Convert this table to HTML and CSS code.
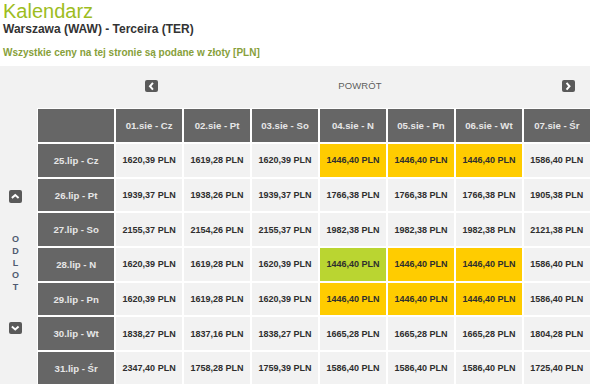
FILE: index.html
```html
<!DOCTYPE html>
<html lang="pl">
<head>
<meta charset="utf-8">
<title>Kalendarz</title>
<link rel="stylesheet" href="styles.css">
</head>
<body>
<div class="head">
  <h1 class="title">Kalendarz</h1>
  <h2 class="route">Warszawa (WAW) - Terceira (TER)</h2>
  <p class="note">Wszystkie ceny na tej stronie są podane w złoty [PLN]</p>
</div>
<div class="panel">
  <div class="nav">
    <span class="btn"><svg viewBox="0 0 12 12"><polyline points="7,3.5 4.8,6 7,8.5"/></svg></span>
    <span class="back">POWRÓT</span>
    <span class="btn"><svg viewBox="0 0 12 12"><polyline points="5,3.5 7.2,6 5,8.5"/></svg></span>
  </div>
  <div class="body">
    <div class="side">
      <span class="btn up"><svg viewBox="0 0 12 12"><polyline points="3.5,7 6,4.8 8.5,7"/></svg></span>
      <span class="odlot">O<br>D<br>L<br>O<br>T</span>
      <span class="btn down"><svg viewBox="0 0 12 12"><polyline points="3.5,5 6,7.2 8.5,5"/></svg></span>
    </div>
    <div class="grid">
      <div class="hd corner"></div>
      <div class="hd">01.sie - Cz</div>
      <div class="hd">02.sie - Pt</div>
      <div class="hd">03.sie - So</div>
      <div class="hd">04.sie - N</div>
      <div class="hd">05.sie - Pn</div>
      <div class="hd">06.sie - Wt</div>
      <div class="hd">07.sie - Śr</div>

      <div class="lbl">25.lip - Cz</div>
      <div class="c">1620,39 PLN</div><div class="c">1619,28 PLN</div><div class="c">1620,39 PLN</div>
      <div class="c y">1446,40 PLN</div><div class="c y">1446,40 PLN</div><div class="c y">1446,40 PLN</div>
      <div class="c">1586,40 PLN</div>

      <div class="lbl">26.lip - Pt</div>
      <div class="c">1939,37 PLN</div><div class="c">1938,26 PLN</div><div class="c">1939,37 PLN</div>
      <div class="c">1766,38 PLN</div><div class="c">1766,38 PLN</div><div class="c">1766,38 PLN</div>
      <div class="c">1905,38 PLN</div>

      <div class="lbl">27.lip - So</div>
      <div class="c">2155,37 PLN</div><div class="c">2154,26 PLN</div><div class="c">2155,37 PLN</div>
      <div class="c">1982,38 PLN</div><div class="c">1982,38 PLN</div><div class="c">1982,38 PLN</div>
      <div class="c">2121,38 PLN</div>

      <div class="lbl">28.lip - N</div>
      <div class="c">1620,39 PLN</div><div class="c">1619,28 PLN</div><div class="c">1620,39 PLN</div>
      <div class="c g">1446,40 PLN</div><div class="c y">1446,40 PLN</div><div class="c y">1446,40 PLN</div>
      <div class="c">1586,40 PLN</div>

      <div class="lbl">29.lip - Pn</div>
      <div class="c">1620,39 PLN</div><div class="c">1619,28 PLN</div><div class="c">1620,39 PLN</div>
      <div class="c y">1446,40 PLN</div><div class="c y">1446,40 PLN</div><div class="c y">1446,40 PLN</div>
      <div class="c">1586,40 PLN</div>

      <div class="lbl">30.lip - Wt</div>
      <div class="c">1838,27 PLN</div><div class="c">1837,16 PLN</div><div class="c">1838,27 PLN</div>
      <div class="c">1665,28 PLN</div><div class="c">1665,28 PLN</div><div class="c">1665,28 PLN</div>
      <div class="c">1804,28 PLN</div>

      <div class="lbl">31.lip - Śr</div>
      <div class="c">2347,40 PLN</div><div class="c">1758,28 PLN</div><div class="c">1759,39 PLN</div>
      <div class="c">1586,40 PLN</div><div class="c">1586,40 PLN</div><div class="c">1586,40 PLN</div>
      <div class="c">1725,40 PLN</div>
    </div>
  </div>
</div>
</body>
</html>
```
FILE: styles.css
```css
html, body {
  margin: 0;
  padding: 0;
  background: #ffffff;
  font-family: "Liberation Sans", Arial, sans-serif;
  overflow: hidden;
}

.head {
  padding-left: 3px;
}

.title {
  margin: 0;
  font-size: 20px;
  line-height: 22px;
  font-weight: normal;
  color: #9dbd1e;
}

.route {
  margin: 0;
  font-size: 12px;
  line-height: 14px;
  font-weight: bold;
  color: #333333;
}

.note {
  margin: 11px 0 0;
  font-size: 10px;
  line-height: 12px;
  font-weight: bold;
  color: #87a03a;
}

.panel {
  margin-top: 7px;
  background: #f2f2f2;
  height: 330px;
}

.nav {
  height: 42px;
  box-sizing: border-box;
  padding: 13.5px 15px 0 145px;
  display: flex;
  justify-content: space-between;
  align-items: flex-start;
}

.btn {
  display: block;
  width: 12.5px;
  height: 12.5px;
  border-radius: 2px;
  background: #5a5a5a;
}

.btn svg {
  display: block;
  width: 12.5px;
  height: 12.5px;
  fill: none;
  stroke: #ffffff;
  stroke-width: 1.9;
  stroke-linecap: square;
}

.back {
  font-size: 9.5px;
  line-height: 12px;
  color: #5e5e5e;
  letter-spacing: 0.1px;
}

.body {
  display: flex;
  align-items: flex-start;
}

.side {
  width: 37px;
  flex: none;
  box-sizing: border-box;
  padding: 82px 6px 0 0;
  display: flex;
  flex-direction: column;
  align-items: center;
}

.odlot {
  margin-top: 30px;
  font-size: 9px;
  line-height: 12px;
  font-weight: bold;
  color: #4f5a70;
  text-align: center;
}

.down {
  margin-top: 29px;
}

.grid {
  flex: 1;
  background: #ffffff;
  padding: 1px 0 0 1px;
  display: grid;
  grid-template-columns: 76.3px repeat(7, 1fr);
  grid-template-rows: 33px repeat(7, 32.7px);
  column-gap: 1.7px;
  row-gap: 2px;
}

.grid > div {
  display: flex;
  align-items: center;
  justify-content: center;
  font-weight: bold;
  white-space: nowrap;
}

.hd, .lbl {
  background: #666666;
  color: #e6e6e6;
  font-size: 9.6px;
}

.c {
  background: #f2f2f2;
  color: #2e2e2e;
  font-size: 9px;
}

.c.y {
  background: #ffcc00;
}

.c.g {
  background: #bad531;
}
```
